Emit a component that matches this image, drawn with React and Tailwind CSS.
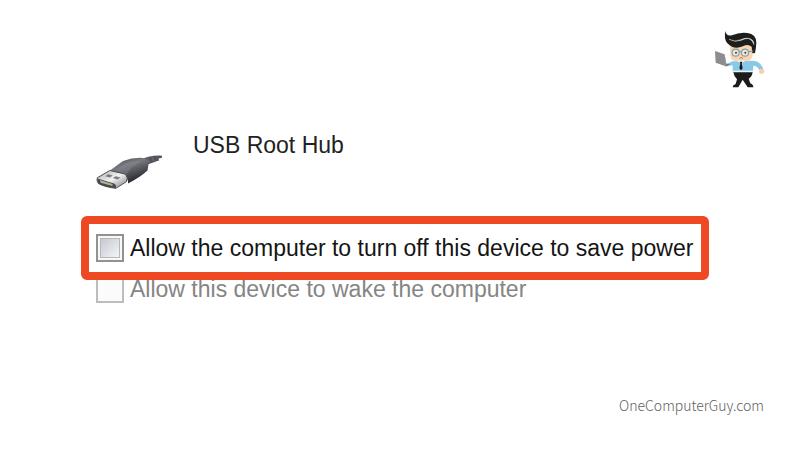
function Mascot() {
  return (
    <svg viewBox="42 30 156 177" className="w-[52px] h-[59px]" role="img" aria-label="OneComputerGuy">
      {/* face */}
      <path d="M90 80 Q92 72 104 72 L156 70 L158 96 Q158 122 146 122 L104 122 Q92 122 91 108 Z" fill="#fbd3b0" />
      <path d="M156 88 h6 q4 2 3 9 q-1 7 -8 7z" fill="#f8c8a4" />
      {/* hair */}
      <path d="M77 33 Q78 50 96 46 Q118 36 142 39 Q169 43 169 68 Q168 86 165 99 L157 99 L155 80 Q146 73 136 76 Q112 88 96 80 Q78 72 75 54 Q73 42 77 33 Z" fill="#1d1d1b" />
      <path d="M87 58 Q104 67 122 59 Q144 49 157 60 Q163 66 162 74 Q157 60 147 56 Q138 54 124 61 Q104 68 87 58 Z" fill="#f4f4f4" stroke="#f4f4f4" strokeWidth="1" />
      {/* glasses */}
      <g fill="#fbe3cd" stroke="#6fa6bd" strokeWidth="3.5">
        <circle cx="107" cy="98" r="10.5" />
        <circle cx="135" cy="98" r="10.5" />
        <path d="M117 96 q4 -3 8 0 M145 95 L160 93" fill="none" />
      </g>
      <circle cx="108" cy="98" r="3" fill="#4a3b36" />
      <circle cx="136" cy="98" r="3" fill="#4a3b36" />
      <path d="M119 115 q5 -4 10 0" fill="none" stroke="#8c6653" strokeWidth="2.5" />
      {/* shirt and arms */}
      <path d="M98 124 L158 122 Q180 122 190 146 L179 151 Q172 137 160 137 L159 157 L98 157 L98 136 L82 139 L79 132 Z" fill="#87c9e6" />
      <path d="M110 123 L123 130 L136 123 Z" fill="#fff" />
      <path d="M119 125 h8 l-2 6 l3 14 l-5 6 l-5 -6 l3 -14z" fill="#171719" />
      <path d="M98 152 h61 v5 h-61z" fill="#e8f3f6" />
      <circle cx="185" cy="154" r="8" fill="#fbceaa" />
      {/* laptop */}
      <path d="M45 93 L74 103 L77 139 L47 128 Z" fill="#8b8d8e" />
      <path d="M74 103 L79 131 L91 132 L77 140 Z" fill="#727678" />
      {/* legs */}
      <path d="M100 157 H158 Q156 171 146 176 L151 190 Q160 193 160 202 H143 L128 179 L115 202 H98 Q98 195 107 192 L111 178 Q102 170 100 157 Z" fill="#1b1b1b" />
    </svg>
  );
}

function UsbPlug() {
  return (
    <svg viewBox="46 98 210 112" className="w-[70px] h-[37px] shrink-0" aria-hidden="true">
      <defs>
        <linearGradient id="grip" x1="0" y1="0" x2="0.5" y2="1">
          <stop offset="0" stopColor="#4b4c52" />
          <stop offset="0.4" stopColor="#777980" />
          <stop offset="1" stopColor="#26272c" />
        </linearGradient>
        <linearGradient id="metal" x1="0" y1="0" x2="1" y2="1">
          <stop offset="0" stopColor="#a9a9ac" />
          <stop offset="0.5" stopColor="#f2f2f4" />
          <stop offset="1" stopColor="#77787b" />
        </linearGradient>
      </defs>
      <path d="M186 118 Q210 104 248 106 L247 113 Q232 113 240 120 Q222 127 206 132 Z" fill="#55565c" />
      <path d="M202 112 l8 15 M216 108 l7 14" stroke="#808288" strokeWidth="2" />
      <path d="M90 151 L130 122 Q160 111 190 113 Q209 116 207 133 L204 151 Q180 173 145 190 Q146 173 130 164 Z" fill="url(#grip)" />
      <path d="M106 151 L140 128 Q165 119 187 122 L155 143 Q145 158 140 163 Z" fill="#8b8c93" opacity="0.4" />
      <path d="M52 173 L90 151 L137 162 Q147 173 140 185 L108 205 Q75 201 55 190 Q49 183 52 173 Z" fill="url(#metal)" stroke="#4e4e50" strokeWidth="3" />
      <path d="M52 175 L103 190 Q111 195 108 204 Q74 201 55 190 Z" fill="#48484a" />
      <path d="M60 180 L98 192 L98 198 L62 188 Z" fill="#b3b28f" />
      <path d="M85 162 l14 4 l-9 6 l-14 -4z M108 168 l14 4 l-9 6 l-14 -4z" fill="#7b7c80" />
    </svg>
  );
}

export default function App() {
  return (
    <div className="min-h-screen bg-white flex flex-col font-['Liberation_Sans',Arial,sans-serif]">
      <header className="flex justify-end pt-[30px] pr-[34px]">
        <Mascot />
      </header>

      <main className="pl-[81px] pr-[91px] pt-10">
        {/* Device */}
        <div className="flex items-start gap-7 pl-[14px] h-[87px]">
          <div className="pt-6">
            <UsbPlug />
          </div>
          <h1 className="text-[23px] leading-8 text-[#222222]">USB Root Hub</h1>
        </div>

        {/* Power options */}
        <div className="relative z-10 bg-white border-8 border-[#ef4923] rounded-md pl-[7px] py-2">
          <label className="flex items-center gap-1.5 text-[23px] leading-8 text-[#151515]">
            <input
              type="checkbox"
              className="appearance-none shrink-0 size-7 p-[2px] bg-[#f8f8f8] border-2 border-[#929292] before:block before:size-full before:border before:border-[#b5b9be] before:bg-linear-to-br before:from-[#c5cad0] before:to-[#f4f4f4]"
            />
            Allow the computer to turn off this device to save power
          </label>
        </div>
        <label className="flex items-center gap-1.5 px-[15px] -mt-[7px] text-[23px] leading-8 text-[#858585]">
          <input
            type="checkbox"
            disabled
            className="appearance-none shrink-0 size-7 bg-[#fbfbfb] border-2 border-[#bdbdbd]"
          />
          Allow this device to wake the computer
        </label>
      </main>

      <footer className="mt-auto pr-9 pb-8 text-right">
        <a
          href="#"
          className="font-['Noto_Sans_CJK_SC',sans-serif] font-light text-sm leading-6 text-[#606060]"
        >
          OneComputerGuy.com
        </a>
      </footer>
    </div>
  );
}
